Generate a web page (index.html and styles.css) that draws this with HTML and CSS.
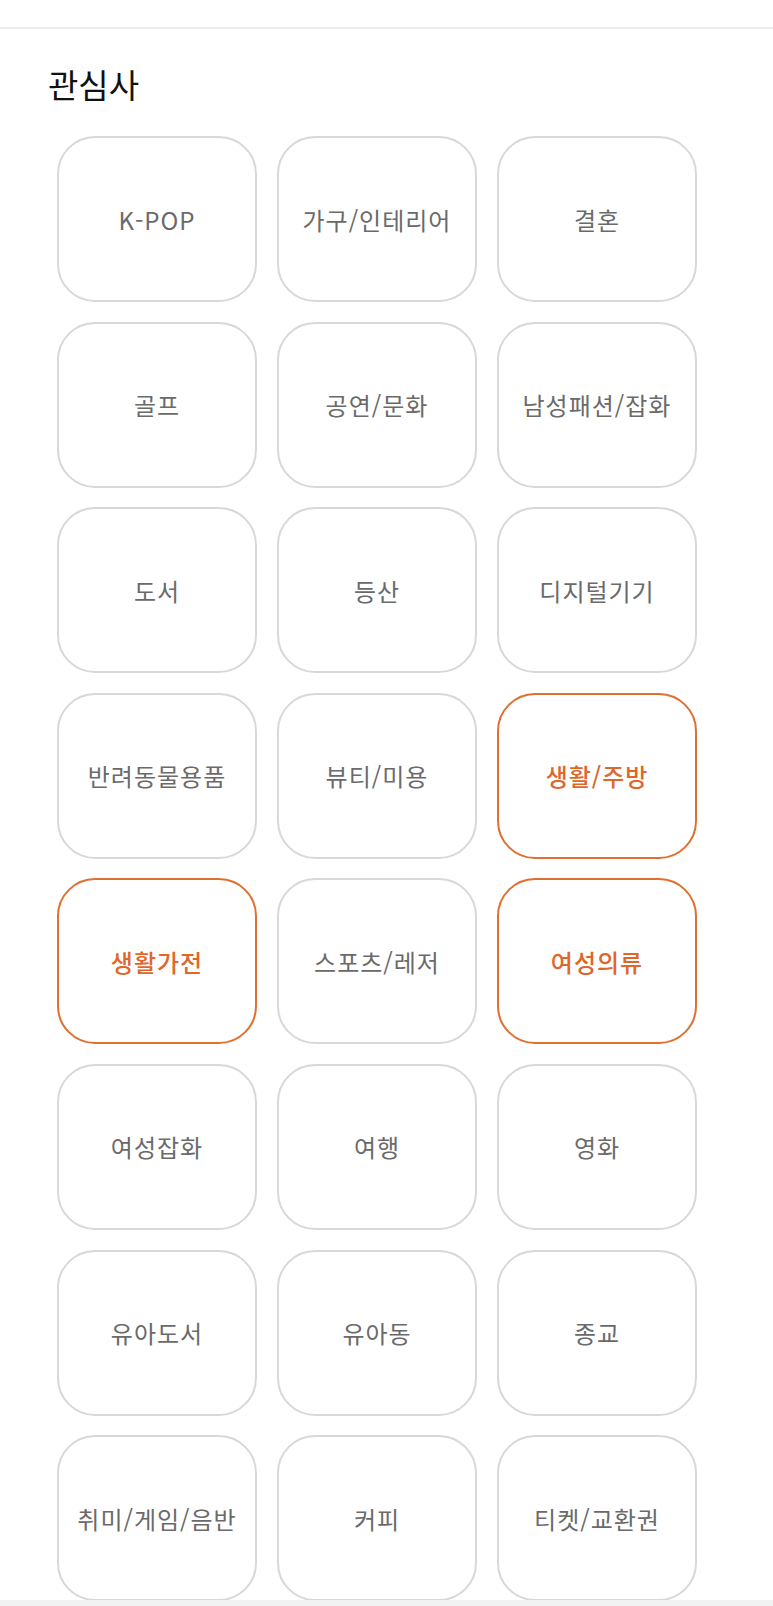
FILE: index.html
```html
<!DOCTYPE html>
<html lang="ko">
<head>
    <meta charset="UTF-8">
    <meta name="viewport" content="width=device-width, initial-scale=1.0">
    <title>관심사</title>
    <link rel="stylesheet" href="styles.css">
</head>
<body>
    <div class="page">
        <div class="top-bar"></div>

        <div class="content">
            <h2 class="section-title">관심사</h2>
            <div class="interest-grid">
                <button class="interest">K-POP</button>
                <button class="interest">가구/인테리어</button>
                <button class="interest">결혼</button>
                <button class="interest">골프</button>
                <button class="interest">공연/문화</button>
                <button class="interest">남성패션/잡화</button>
                <button class="interest">도서</button>
                <button class="interest">등산</button>
                <button class="interest">디지털기기</button>
                <button class="interest">반려동물용품</button>
                <button class="interest">뷰티/미용</button>
                <button class="interest selected">생활/주방</button>
                <button class="interest selected">생활가전</button>
                <button class="interest">스포츠/레저</button>
                <button class="interest selected">여성의류</button>
                <button class="interest">여성잡화</button>
                <button class="interest">여행</button>
                <button class="interest">영화</button>
                <button class="interest">유아도서</button>
                <button class="interest">유아동</button>
                <button class="interest">종교</button>
                <button class="interest">취미/게임/음반</button>
                <button class="interest">커피</button>
                <button class="interest">티켓/교환권</button>
            </div>
        </div>

        <div class="bottom-bar"></div>
    </div>
</body>
</html>
```

FILE: styles.css
```css
* {
    margin: 0;
    padding: 0;
    box-sizing: border-box;
    font-family: "Noto Sans CJK KR", "Noto Sans", sans-serif;
}

body {
    background-color: #fff;
}

.page {
    display: flex;
    flex-direction: column;
    height: 100vh;
}

.top-bar {
    height: 29px;
    flex-shrink: 0;
    border-bottom: 2px solid #ececec;
}

.content {
    flex: 1;
    overflow: hidden;
}

.section-title {
    margin: 35px 0 0 48px;
    font-size: 33px;
    font-weight: 400;
    line-height: 40px;
    color: #111;
}

.interest-grid {
    display: grid;
    grid-template-columns: repeat(3, 200px);
    grid-auto-rows: 166px;
    column-gap: 20px;
    row-gap: 19.6px;
    margin-top: 32px;
    padding-left: 57px;
}

.interest {
    display: flex;
    align-items: center;
    justify-content: center;
    background-color: #fff;
    border: 2px solid #d8d8d8;
    border-radius: 38px;
    font-size: 24px;
    font-weight: 400;
    letter-spacing: 1px;
    color: #6a6a6a;
    cursor: pointer;
}

.interest.selected {
    border-color: #e0702f;
    color: #e0662a;
    font-weight: 500;
}

.bottom-bar {
    height: 6px;
    flex-shrink: 0;
    background-color: #f2f2f2;
}
```
